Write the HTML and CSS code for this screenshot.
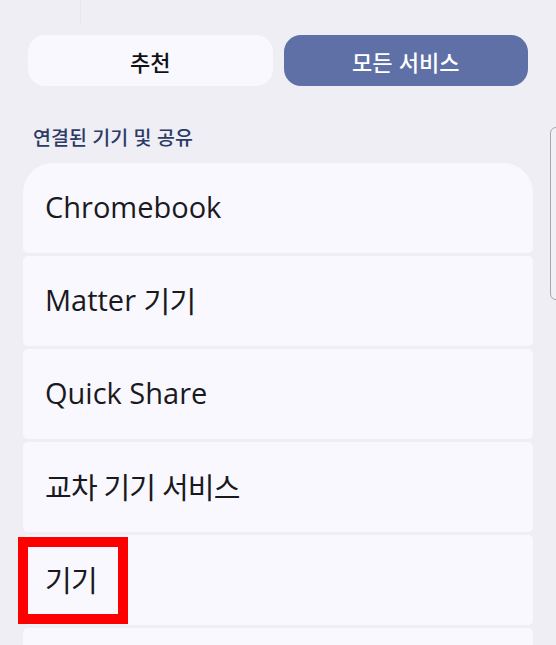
FILE: index.html
```html
<!DOCTYPE html>
<html lang="ko">
<head>
<meta charset="utf-8">
<link rel="stylesheet" href="styles.css">
</head>
<body>
<div class="screen">
  <div class="topstrip"><div class="topline"></div></div>
  <div class="tabs">
    <div class="tab">추천</div>
    <div class="tab active">모든 서비스</div>
  </div>
  <div class="section-label">연결된 기기 및 공유</div>
  <div class="list">
    <div class="item first">Chromebook</div>
    <div class="item">Matter&nbsp;<span class="ko">기기</span></div>
    <div class="item">Quick Share</div>
    <div class="item"><span class="ko">교차 기기 서비스</span></div>
    <div class="item"><span class="ko">기기</span></div>
    <div class="item"></div>
  </div>
  <div class="scrollbar"></div>
  <div class="highlight"></div>
</div>
</body>
</html>
```

FILE: styles.css
```css
html, body {
  margin: 0;
  padding: 0;
  background: #eeeef4;
}
.screen {
  position: relative;
  width: 556px;
  height: 645px;
  overflow: hidden;
  background: #eeeef4;
  font-family: "Open Sans", "Noto Sans CJK KR", sans-serif;
}
.topstrip {
  height: 35px;
  display: flex;
}
.topline {
  width: 80px;
  height: 25px;
  border-right: 1px solid #e6e6ec;
}
.tabs {
  display: flex;
  gap: 11px;
  padding: 0 28px;
}
.tab {
  flex: 1;
  height: 51px;
  border-radius: 17px;
  background: #f9f8fe;
  display: flex;
  align-items: center;
  justify-content: center;
  font-family: "Noto Sans CJK KR", sans-serif;
  font-size: 22px;
  font-weight: 500;
  color: #111114;
}
.tab.active {
  background: #5f70a7;
  color: #ffffff;
}
.section-label {
  margin-top: 39px;
  padding-left: 33px;
  font-family: "Noto Sans CJK KR", sans-serif;
  font-size: 19.5px;
  line-height: 24px;
  font-weight: 500;
  color: #2c3a67;
}
.list {
  margin: 14px 23px 0;
  display: flex;
  flex-direction: column;
  gap: 3px;
}
.item {
  height: 90px;
  flex: none;
  box-sizing: border-box;
  background: #f9f8fe;
  border-radius: 5px;
  display: flex;
  align-items: center;
  padding: 0 0 3px 22px;
  font-size: 29px;
  color: #1a1a1e;
}
.item .ko {
  letter-spacing: -0.8px;
}
.item.first {
  border-radius: 30px 30px 5px 5px;
}
.scrollbar {
  position: absolute;
  left: 550px;
  top: 127px;
  width: 12px;
  height: 173px;
  border: 1.5px solid #a6a6ac;
  border-radius: 6px;
  background: #f1f1f5;
  box-sizing: border-box;
}
.highlight {
  position: absolute;
  left: 18px;
  top: 537px;
  width: 110px;
  height: 87px;
  border: 10px solid #ff0000;
  box-sizing: border-box;
}
```
